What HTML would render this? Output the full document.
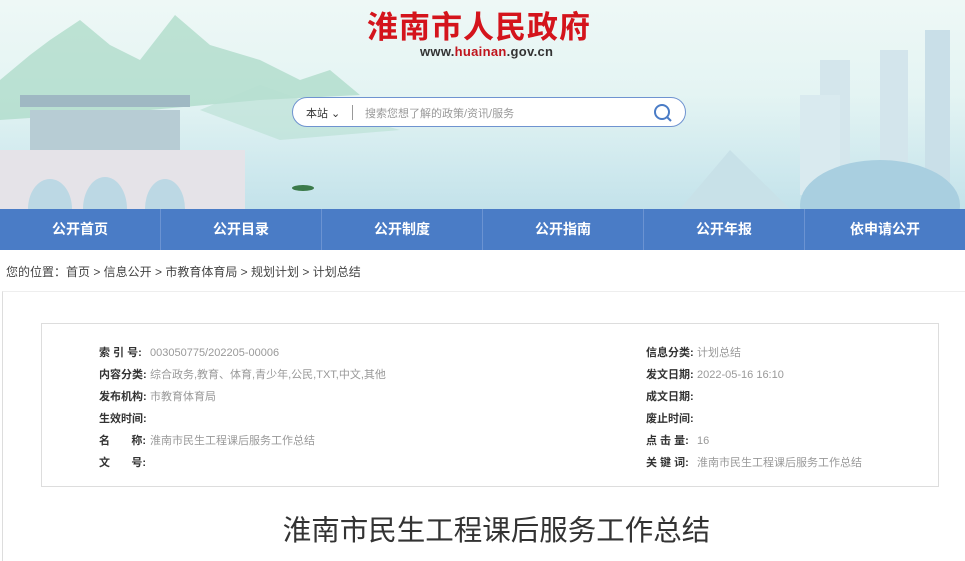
<!DOCTYPE html>
<html><head><meta charset="utf-8"><style>
*{margin:0;padding:0;box-sizing:border-box}
body{width:965px;height:553px;overflow:hidden;background:#fff;font-family:"Liberation Sans","Noto Sans CJK SC",sans-serif;position:relative}
.hd{position:absolute;left:0;top:0;width:965px;height:209px;background:linear-gradient(180deg,#eef8f6 0%,#e4f4f3 45%,#cfe9ee 80%,#c3e2ea 100%);overflow:hidden}
.logo{position:absolute;left:367px;top:2px;font-size:31px;font-weight:bold;color:#d4141c;letter-spacing:1px;font-family:"Noto Sans CJK SC",sans-serif}
.url{position:absolute;left:420px;top:44px;font-size:13px;font-weight:bold;color:#333;letter-spacing:.3px}
.url b{color:#c0141c}
.sb{position:absolute;left:292px;top:97px;width:394px;height:30px;border:1px solid #6f93d0;border-radius:15px;background:#fff}
.sb .a{position:absolute;left:13px;top:7px;font-size:11px;color:#333}
.sb .l{position:absolute;left:59px;top:7px;width:1px;height:15px;background:#999}
.sb .p{position:absolute;left:72px;top:7px;font-size:11px;color:#999}
.nav{position:absolute;left:0;top:209px;width:965px;height:41px;background:#4a7cc6;display:flex}
.nav div{flex:1;color:#fff;font-size:14px;font-weight:bold;text-align:center;line-height:41px;border-left:1px solid #6b93d2}
.nav div:first-child{border-left:none}
.bc{position:absolute;left:6px;top:263px;font-size:12px;color:#444}
.main{position:absolute;left:2px;top:291px;width:963px;height:270px;border-left:1px solid #ddd;border-top:1px solid #eee}
.box{position:absolute;left:41px;top:323px;width:898px;height:164px;border:1px solid #ddd}
.r{position:absolute;font-size:11px;color:#333;white-space:nowrap}
.r i{font-style:normal;font-weight:bold;display:inline-block;width:51px}
.r span{color:#999}
.t{position:absolute;left:14px;width:965px;top:508px;text-align:center;font-size:28.5px;color:#333}
</style></head><body>
<div class="hd">
<svg width="965" height="209" style="position:absolute;left:0;top:0">
<path d="M0 80 L30 55 L50 40 L80 20 L110 45 L140 60 L175 15 L210 45 L260 60 L300 80 L330 70 L360 95 L260 100 L150 110 L0 120Z" fill="#a8d9c4" opacity=".7"/>
<path d="M200 110 L260 85 L330 110 L400 130 L280 140Z" fill="#b7e0d2" opacity=".6"/>
<rect x="820" y="60" width="30" height="120" fill="#d4e6ec"/><rect x="880" y="50" width="28" height="140" fill="#d3e5ec"/><rect x="925" y="30" width="25" height="160" fill="#c9dfe8"/>
<rect x="800" y="95" width="40" height="100" fill="#d9eaef"/>
<ellipse cx="880" cy="205" rx="80" ry="45" fill="#a9cfe0"/>
<path d="M680 209 L730 150 L790 209Z" fill="#c8e1e8"/>
<rect x="30" y="110" width="150" height="50" fill="#b7ccd4"/><rect x="20" y="95" width="170" height="12" fill="#9fb8c3"/>
<rect x="0" y="150" width="245" height="60" fill="#e5e3e8"/>
<ellipse cx="50" cy="209" rx="22" ry="30" fill="#bcd8e4"/><ellipse cx="105" cy="209" rx="22" ry="32" fill="#bcd8e4"/><ellipse cx="165" cy="209" rx="20" ry="30" fill="#bcd8e4"/>
<ellipse cx="303" cy="188" rx="11" ry="3" fill="#3b7a4a"/>
</svg>
<div class="logo">淮南市人民政府</div>
<div class="url">www.<b>huainan</b>.gov.cn</div>
<div class="sb"><div class="a">本站 ⌄</div><div class="l"></div><div class="p">搜索您想了解的政策/资讯/服务</div>
<svg width="20" height="20" style="position:absolute;left:360px;top:5px"><circle cx="9" cy="9" r="7" fill="none" stroke="#4a7cc6" stroke-width="2"/><path d="M14 14 L18 18" stroke="#4a7cc6" stroke-width="2"/></svg></div>
</div>
<div class="nav"><div>公开首页</div><div>公开目录</div><div>公开制度</div><div>公开指南</div><div>公开年报</div><div>依申请公开</div></div>
<div class="bc">您的位置：首页 &gt; 信息公开 &gt; 市教育体育局 &gt; 规划计划 &gt; 计划总结</div>
<div class="main"></div>
<div class="box"></div>
<div class="r" style="left:99px;top:344px"><i>索 引 号:</i><span>003050775/202205-00006</span></div>
<div class="r" style="left:99px;top:366px"><i>内容分类:</i><span>综合政务,教育、体育,青少年,公民,TXT,中文,其他</span></div>
<div class="r" style="left:99px;top:388px"><i>发布机构:</i><span>市教育体育局</span></div>
<div class="r" style="left:99px;top:410px"><i>生效时间:</i></div>
<div class="r" style="left:99px;top:432px"><i>名&nbsp;&nbsp;&nbsp;&nbsp;&nbsp;&nbsp;&nbsp;称:</i><span>淮南市民生工程课后服务工作总结</span></div>
<div class="r" style="left:99px;top:454px"><i>文&nbsp;&nbsp;&nbsp;&nbsp;&nbsp;&nbsp;&nbsp;号:</i></div>
<div class="r" style="left:646px;top:344px"><i>信息分类:</i><span>计划总结</span></div>
<div class="r" style="left:646px;top:366px"><i>发文日期:</i><span>2022-05-16 16:10</span></div>
<div class="r" style="left:646px;top:388px"><i>成文日期:</i></div>
<div class="r" style="left:646px;top:410px"><i>废止时间:</i></div>
<div class="r" style="left:646px;top:432px"><i>点 击 量:</i><span>16</span></div>
<div class="r" style="left:646px;top:454px"><i>关 键 词:</i><span>淮南市民生工程课后服务工作总结</span></div>
<div class="t">淮南市民生工程课后服务工作总结</div>
</body></html>
